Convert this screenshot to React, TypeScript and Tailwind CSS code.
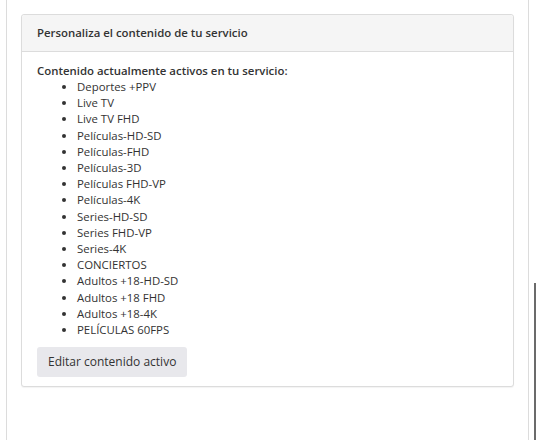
const items = [
  'Deportes +PPV',
  'Live TV',
  'Live TV FHD',
  'Películas-HD-SD',
  'Películas-FHD',
  'Películas-3D',
  'Películas FHD-VP',
  'Películas-4K',
  'Series-HD-SD',
  'Series FHD-VP',
  'Series-4K',
  'CONCIERTOS',
  'Adultos +18-HD-SD',
  'Adultos +18 FHD',
  'Adultos +18-4K',
  'PELÍCULAS 60FPS',
];

export default function App() {
  return (
    <div className="relative h-[440px] w-[536px] overflow-hidden bg-white font-['Open_Sans',sans-serif] text-[#333]">
      <div className="ml-[6px] h-full w-[523px] border-x border-[#dcdcdc] px-[14px] pt-[14px]">
        <div className="rounded-[3px] border border-[#dcdcdc] bg-white shadow-[0_1px_1px_rgba(0,0,0,0.05)]">
          <div className="rounded-t-[3px] border-b border-[#dcdcdc] bg-[#f5f5f5] px-[15px] py-[10px] text-[11.4px] leading-[16px] font-semibold">
            Personaliza el contenido de tu servicio
          </div>
          <div className="px-[15px] pt-[11px] pb-[9px]">
            <p className="text-[11.4px] leading-[16px] font-semibold">Contenido actualmente activos en tu servicio:</p>
            <ul className="list-disc pl-[40px] text-[11.4px] leading-[16.2px]">
              {items.map((it) => (
                <li key={it}>{it}</li>
              ))}
            </ul>
            <button
              type="button"
              className="mt-[9px] h-[30px] rounded-[3px] bg-[#e8e8ec] px-[11px] text-[12px] text-[#333]"
            >
              Editar contenido activo
            </button>
          </div>
        </div>
      </div>
      <div className="absolute top-[283px] right-0 h-[157px] w-[2px] bg-[#6b6b6b]" />
    </div>
  );
}
